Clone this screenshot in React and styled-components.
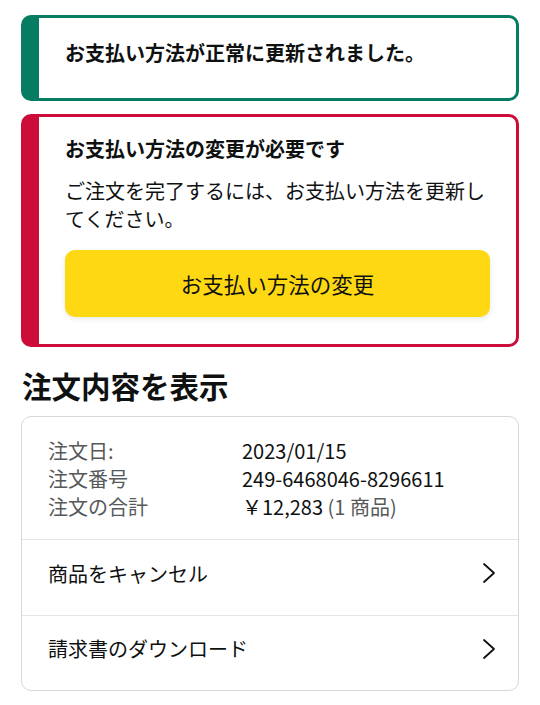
import styled, { createGlobalStyle } from 'styled-components';

const GlobalStyle = createGlobalStyle`
  * { box-sizing: border-box; }
  body {
    margin: 0;
    background: #fff;
    color: #0f1111;
    font-family: "Noto Sans CJK JP", "Noto Sans", sans-serif;
  }
`

const Page = styled.main`
  padding: 15px 21px 15px 21px;
  display: flex;
  flex-direction: column;
`

const Alert = styled.section`
  border: 3px solid ${p => p.$color};
  border-left-width: 18px;
  border-radius: 10px;
  padding: ${p => p.$pad};
  margin-bottom: 13px;
`

const AlertTitle = styled.h4`
  margin: 0;
  font-size: 20px;
  line-height: 28px;
  font-weight: 700;
`

const AlertText = styled.p`
  margin: 14px 0 17px;
  font-size: 20px;
  line-height: 28px;
`

const YellowButton = styled.button`
  display: block;
  width: 100%;
  height: 67px;
  border: none;
  border-radius: 10px;
  background: #ffd814;
  box-shadow: 0 2px 5px 0 rgba(213, 217, 217, 0.6);
  font-family: inherit;
  font-size: 21.5px;
  color: #0f1111;
`

const Heading = styled.h2`
  margin: 7px 0 13px 1px;
  font-size: 29.5px;
  line-height: 36px;
  font-weight: 700;
`

const Card = styled.div`
  border: 1px solid #d5d9d9;
  border-radius: 10px;
  overflow: hidden;
`

const Summary = styled.dl`
  margin: 0;
  padding: 20px 26px 18px;
  display: grid;
  grid-template-columns: 194px 1fr;
  font-size: 20px;
  line-height: 28px;
  border-bottom: 1px solid #e3e6e6;
  dt { color: #565959; }
  dd { margin: 0; color: #0f1111; }
  span { color: #565959; }
`

const ActionRow = styled.a`
  display: flex;
  align-items: center;
  justify-content: space-between;
  height: 75px;
  padding: 0 22px 9px 26px;
  font-size: 20px;
  color: #0f1111;
  text-decoration: none;
  border-top: ${p => (p.$first ? 'none' : '1px solid #e3e6e6')};
`

const Chevron = () => (
  <svg width="14" height="22" viewBox="0 0 14 22" fill="none">
    <polyline points="2,2 12,11 2,20" stroke="#0f1111" strokeWidth="1.8" strokeLinecap="round" strokeLinejoin="round" />
  </svg>
)

export default function App() {
  return (
    <>
      <GlobalStyle />
      <Page>
        <Alert $color="#067d62" $pad="21px 26px 31px">
          <AlertTitle>お支払い方法が正常に更新されました。</AlertTitle>
        </Alert>
        <Alert $color="#cc0c39" $pad="18px 26px 27px 26px">
          <AlertTitle>お支払い方法の変更が必要です</AlertTitle>
          <AlertText>ご注文を完了するには、お支払い方法を更新してください。</AlertText>
          <YellowButton>お支払い方法の変更</YellowButton>
        </Alert>
        <Heading>注文内容を表示</Heading>
        <Card>
          <Summary>
            <dt>注文日:</dt>
            <dd>2023/01/15</dd>
            <dt>注文番号</dt>
            <dd>249-6468046-8296611</dd>
            <dt>注文の合計</dt>
            <dd>￥12,283 <span>(1 商品)</span></dd>
          </Summary>
          <ActionRow href="#" $first>
            商品をキャンセル
            <Chevron />
          </ActionRow>
          <ActionRow href="#">
            請求書のダウンロード
            <Chevron />
          </ActionRow>
        </Card>
      </Page>
    </>
  )
}
